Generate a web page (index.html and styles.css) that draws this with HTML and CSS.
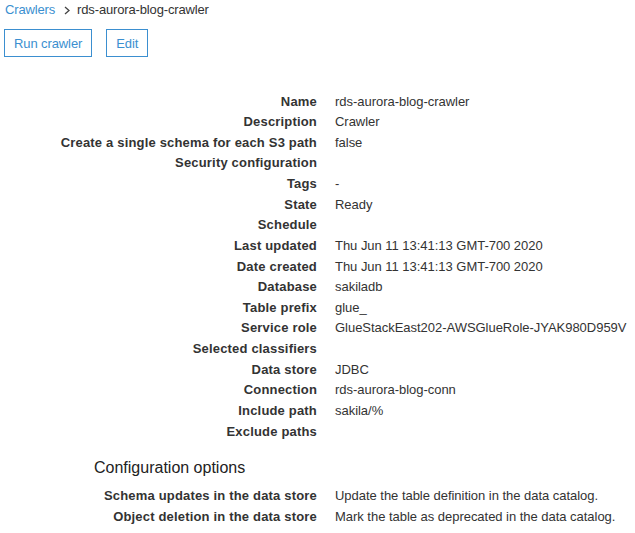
FILE: index.html
```html
<!DOCTYPE html>
<html>
<head>
<meta charset="utf-8">
<link rel="stylesheet" href="styles.css">
</head>
<body>
<div class="page">
  <nav class="crumbs">
    <a class="crumb-link" href="#">Crawlers</a>
    <svg class="crumb-sep" width="6" height="9" viewBox="0 0 6 9"><path d="M1 1 L5 4.5 L1 8" fill="none" stroke="#444" stroke-width="1.3"/></svg>
    <span class="crumb-cur">rds-aurora-blog-crawler</span>
  </nav>
  <div class="actions">
    <button class="btn">Run crawler</button>
    <button class="btn">Edit</button>
  </div>
  <dl class="details details-main">
    <dt>Name</dt><dd>rds-aurora-blog-crawler</dd>
    <dt>Description</dt><dd>Crawler</dd>
    <dt>Create a single schema for each S3 path</dt><dd>false</dd>
    <dt>Security configuration</dt><dd></dd>
    <dt>Tags</dt><dd>-</dd>
    <dt>State</dt><dd>Ready</dd>
    <dt>Schedule</dt><dd></dd>
    <dt>Last updated</dt><dd>Thu Jun 11 13:41:13 GMT-700 2020</dd>
    <dt>Date created</dt><dd>Thu Jun 11 13:41:13 GMT-700 2020</dd>
    <dt>Database</dt><dd>sakiladb</dd>
    <dt>Table prefix</dt><dd>glue_</dd>
    <dt>Service role</dt><dd>GlueStackEast202-AWSGlueRole-JYAK980D959V</dd>
    <dt>Selected classifiers</dt><dd></dd>
    <dt>Data store</dt><dd>JDBC</dd>
    <dt>Connection</dt><dd>rds-aurora-blog-conn</dd>
    <dt>Include path</dt><dd>sakila/%</dd>
    <dt>Exclude paths</dt><dd></dd>
  </dl>
  <h2 class="section-title">Configuration options</h2>
  <dl class="details">
    <dt>Schema updates in the data store</dt><dd>Update the table definition in the data catalog.</dd>
    <dt>Object deletion in the data store</dt><dd>Mark the table as deprecated in the data catalog.</dd>
  </dl>
</div>
</body>
</html>
```
FILE: styles.css
```css
html, body {
  margin: 0;
  padding: 0;
  background: #ffffff;
}
.page {
  font-family: "Liberation Sans", Arial, sans-serif;
  font-size: 13px;
  color: #333333;
  white-space: nowrap;
}
.crumbs {
  display: flex;
  align-items: center;
  height: 20px;
  padding: 0 0 0 5px;
  line-height: 20px;
  letter-spacing: -0.15px;
}
.crumb-link {
  color: #3b8fd0;
  text-decoration: none;
}
.crumb-sep {
  margin: 1px 7px 0 9px;
}
.crumb-cur {
  color: #333;
}
.actions {
  display: flex;
  gap: 14px;
  padding: 9px 0 0 4px;
}
.btn {
  font-family: inherit;
  font-size: 13px;
  letter-spacing: -0.1px;
  color: #3b8fd0;
  background: #fff;
  border: 1px solid #3b8fd0;
  border-radius: 0;
  height: 28px;
  padding: 0 9px;
  margin: 0;
}
.details {
  display: grid;
  grid-template-columns: 317px 1fr;
  column-gap: 18px;
  margin: 0;
  line-height: 20.625px;
}
.details-main {
  margin-top: 34.5px;
}
.details dt {
  font-weight: bold;
  text-align: right;
  margin: 0;
  letter-spacing: 0.18px;
}
.details dd {
  margin: 0;
  letter-spacing: -0.03px;
}
.section-title {
  font-size: 16px;
  font-weight: normal;
  color: #222;
  margin: 16px 0 8px 94px;
  line-height: 20px;
}
```
